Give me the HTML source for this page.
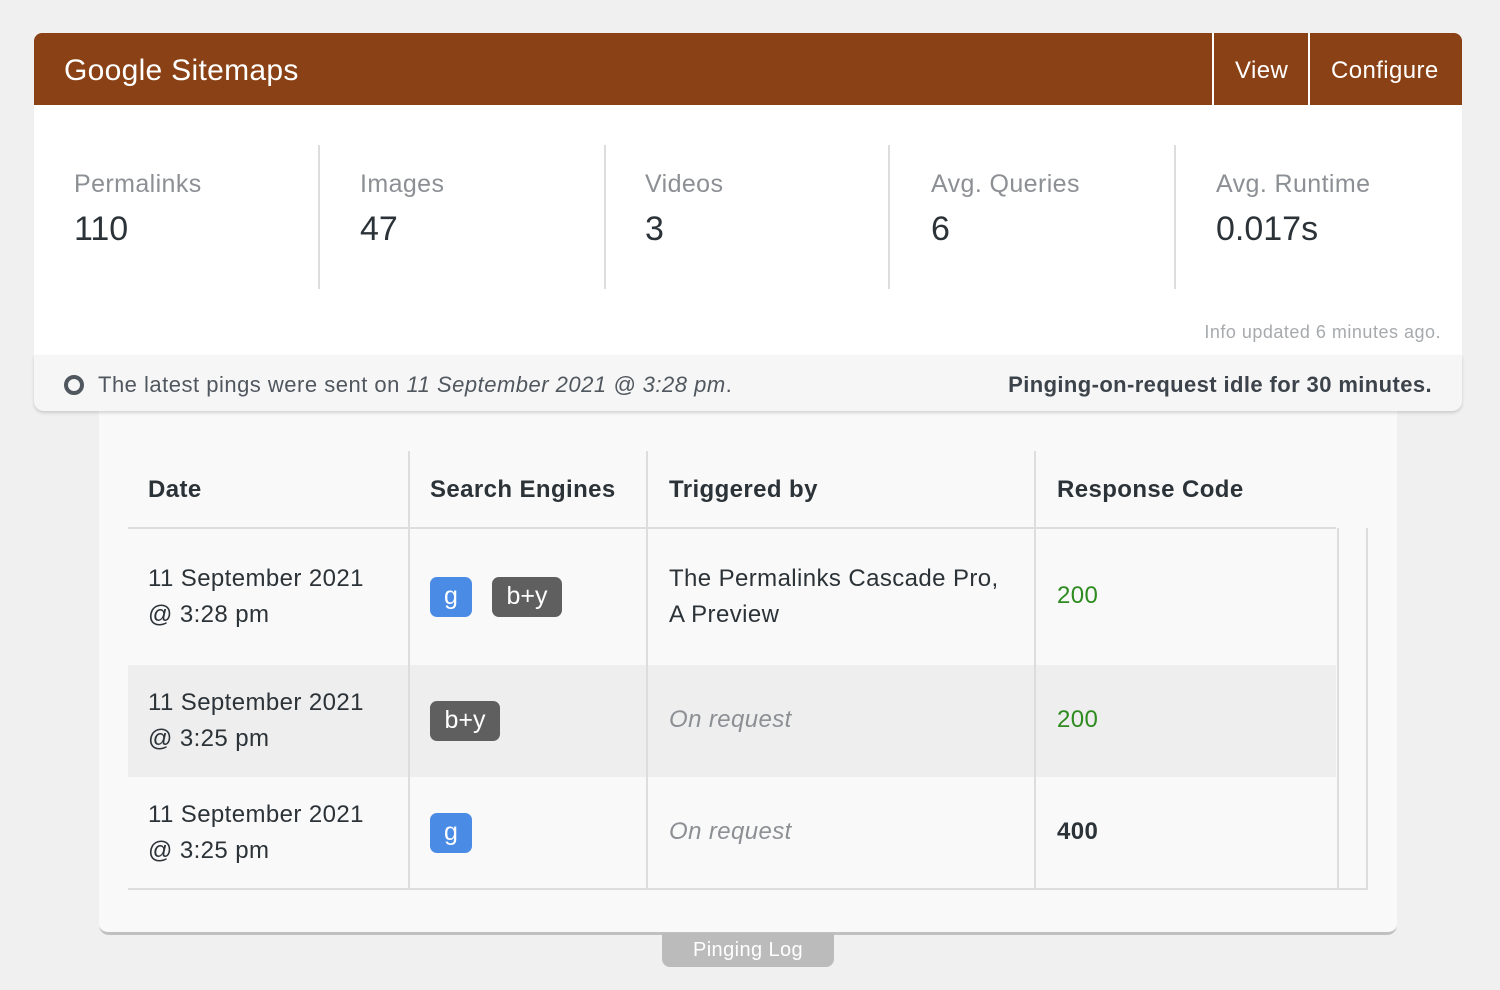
<!DOCTYPE html>
<html><head><style>
*{margin:0;padding:0;box-sizing:border-box}
body{width:1500px;height:990px;background:#f0f0f0;font-family:"Liberation Sans",sans-serif;position:relative;overflow:hidden;color:#3c434a}
.a{position:absolute;white-space:nowrap}
.hdr{left:34px;top:33px;width:1428px;height:72px;background:#8a4115;border-radius:8px 8px 0 0}
.wl{position:absolute;top:33px;width:2px;height:72px;background:#fff}
.stats{left:34px;top:105px;width:1428px;height:250px;background:#fff}
.foot{left:34px;top:355px;width:1428px;height:56px;background:#f6f6f6;border-radius:0 0 10px 10px;box-shadow:0 2px 3px rgba(0,0,0,.15)}
.vl{position:absolute;width:2px;background:#ddd}
.hl{position:absolute;height:2px;background:#ddd}
.lbl{font-size:25px;color:#8c8f94;letter-spacing:.4px}
.num{font-size:34px;color:#2c3338}
.b{position:absolute;height:40px;border-radius:7px;color:#fff;font-size:25px;text-align:center;line-height:38px}
.t{font-size:24px;color:#2c3338;letter-spacing:.4px}
</style></head><body>
<div class="a" style="left:99px;top:400px;width:1298px;height:535px;background:#f9f9f9;border-bottom:3px solid #c0c0c0;border-radius:0 0 10px 10px"></div>
<div class="a hdr"></div>
<div class="a" style="left:64px;top:54px;font-size:30px;color:#fff;letter-spacing:.3px">Google Sitemaps</div>
<div class="wl" style="left:1212px"></div><div class="wl" style="left:1308px"></div>
<div class="a" style="left:1235px;top:57px;font-size:24px;color:#fff;letter-spacing:.4px">View</div>
<div class="a" style="left:1331px;top:57px;font-size:24px;color:#fff;letter-spacing:.4px">Configure</div>
<div class="a stats"></div>
<div class="vl" style="left:318px;top:145px;height:144px"></div>
<div class="vl" style="left:604px;top:145px;height:144px"></div>
<div class="vl" style="left:888px;top:145px;height:144px"></div>
<div class="vl" style="left:1174px;top:145px;height:144px"></div>
<div class="a lbl" style="left:74px;top:170px">Permalinks</div><div class="a num" style="left:74px;top:210px">110</div>
<div class="a lbl" style="left:360px;top:170px">Images</div><div class="a num" style="left:360px;top:210px">47</div>
<div class="a lbl" style="left:645px;top:170px">Videos</div><div class="a num" style="left:645px;top:210px">3</div>
<div class="a lbl" style="left:931px;top:170px">Avg. Queries</div><div class="a num" style="left:931px;top:210px">6</div>
<div class="a lbl" style="left:1216px;top:170px">Avg. Runtime</div><div class="a num" style="left:1216px;top:210px">0.017s</div>
<div class="a" style="right:59px;top:322px;font-size:18px;color:#a7aaad;letter-spacing:.5px">Info updated 6 minutes ago.</div>
<div class="a foot"></div>
<div class="a" style="left:64px;top:375px;width:20px;height:20px;border:4px solid #50575e;border-radius:50%"></div>
<div class="a" style="left:98px;top:372px;font-size:22px;color:#50575e;letter-spacing:.5px">The latest pings were sent on <i>11 September 2021 @ 3:28 pm</i>.</div>
<div class="a" style="right:68px;top:372px;font-size:22px;color:#3c434a;font-weight:bold;letter-spacing:.4px">Pinging-on-request idle for 30 minutes.</div>
<div class="a" style="left:128px;top:665px;width:1208px;height:112px;background:#eee"></div>
<div class="vl" style="left:408px;top:451px;height:439px"></div>
<div class="vl" style="left:646px;top:451px;height:439px"></div>
<div class="vl" style="left:1034px;top:451px;height:439px"></div>
<div class="vl" style="left:1337px;top:528px;height:362px"></div>
<div class="vl" style="left:1366px;top:528px;height:362px"></div>
<div class="hl" style="left:128px;top:527px;width:1208px"></div>
<div class="hl" style="left:128px;top:888px;width:1240px"></div>
<div class="a t" style="left:148px;top:476px;font-weight:bold">Date</div>
<div class="a t" style="left:430px;top:476px;font-weight:bold">Search Engines</div>
<div class="a t" style="left:669px;top:476px;font-weight:bold">Triggered by</div>
<div class="a t" style="left:1057px;top:476px;font-weight:bold">Response Code</div>
<div class="a t" style="left:148px;top:561px;line-height:36px">11 September 2021<br>@ 3:28 pm</div>
<div class="b" style="left:430px;top:577px;width:42px;background:#4a8be6">g</div>
<div class="b" style="left:492px;top:577px;width:70px;background:#5f5f5f">b+y</div>
<div class="a t" style="left:669px;top:561px;line-height:36px">The Permalinks Cascade Pro,<br>A Preview</div>
<div class="a t" style="left:1057px;top:582px;color:#2e8b1f">200</div>
<div class="a t" style="left:148px;top:685px;line-height:36px">11 September 2021<br>@ 3:25 pm</div>
<div class="b" style="left:430px;top:701px;width:70px;background:#5f5f5f">b+y</div>
<div class="a t" style="left:669px;top:706px;color:#8c8f94;font-style:italic">On request</div>
<div class="a t" style="left:1057px;top:706px;color:#2e8b1f">200</div>
<div class="a t" style="left:148px;top:797px;line-height:36px">11 September 2021<br>@ 3:25 pm</div>
<div class="b" style="left:430px;top:813px;width:42px;background:#4a8be6">g</div>
<div class="a t" style="left:669px;top:818px;color:#8c8f94;font-style:italic">On request</div>
<div class="a t" style="left:1057px;top:818px;font-weight:bold">400</div>
<div class="a" style="left:662px;top:933px;width:172px;height:34px;background:#bbb;border-radius:0 0 8px 8px;color:#fff;font-size:20px;text-align:center;line-height:34px;letter-spacing:.4px">Pinging Log</div>
</body></html>
